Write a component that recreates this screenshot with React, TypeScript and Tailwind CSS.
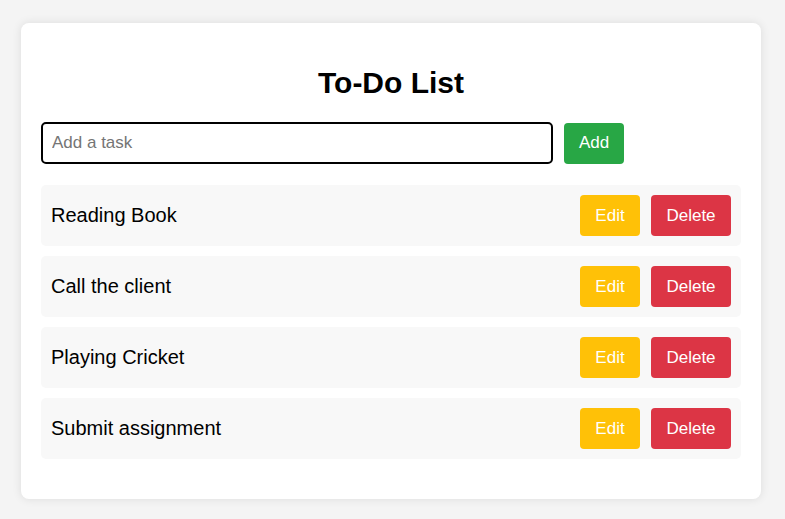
import React, { useState } from 'react';

const initialTasks = ['Reading Book', 'Call the client', 'Playing Cricket', 'Submit assignment'];

export default function App() {
    const [tasks, setTasks] = useState<string[]>(initialTasks);
    const [text, setText] = useState('');

    const addTask = () => {
        if (!text.trim()) return;
        setTasks([...tasks, text.trim()]);
        setText('');
    };

    return (
        <div className="min-h-[519px] bg-[#f4f4f4] pt-[23px] pb-5 font-['Liberation_Sans',Arial,sans-serif] text-black">
            <div className="ml-[21px] w-[740px] rounded-lg bg-white px-5 pt-[43px] pb-10 shadow-[0_0_10px_rgba(0,0,0,0.1)]">
                {/* Header */}
                <h2 className="mb-[22px] h-[34px] text-center text-[30px] leading-[34px] font-bold">To-Do List</h2>

                {/* Input row */}
                <div className="flex items-center gap-[11px]">
                    <input
                        value={text}
                        onChange={(e) => setText(e.target.value)}
                        placeholder="Add a task"
                        className="h-[42px] w-[512px] rounded-[5px] border-2 border-black px-[9px] text-[17px] outline-none placeholder:text-[#757575]"
                    />
                    <button
                        onClick={addTask}
                        className="h-[41px] w-[60px] rounded-[4px] bg-[#28a745] text-[17px] text-white"
                    >
                        Add
                    </button>
                </div>

                {/* Task list */}
                <ul className="mt-[21px] flex flex-col gap-[10px]">
                    {tasks.map((task, i) => (
                        <li key={i} className="flex h-[61px] items-center justify-between rounded-[5px] bg-[#f8f8f8] px-[10px]">
                            <span className="-mt-[2px] text-[20px]">{task}</span>
                            <div className="flex gap-[11px]">
                                <button className="h-[41px] w-[60px] rounded-[4px] bg-[#ffc107] text-[17px] text-white">Edit</button>
                                <button
                                    onClick={() => setTasks(tasks.filter((_, j) => j !== i))}
                                    className="h-[41px] w-[80px] rounded-[4px] bg-[#dc3545] text-[17px] text-white"
                                >
                                    Delete
                                </button>
                            </div>
                        </li>
                    ))}
                </ul>
            </div>
        </div>
    );
}
